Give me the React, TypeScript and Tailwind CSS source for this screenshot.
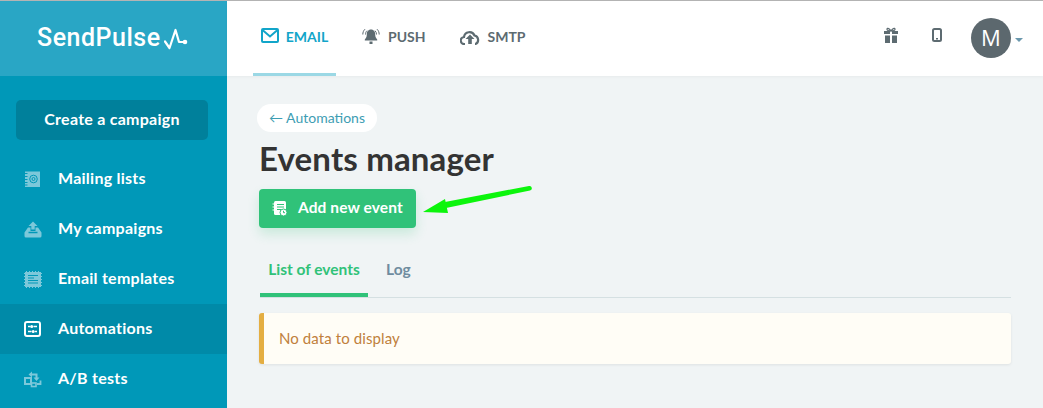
import React from "react";

function IconBook() {
  return (
    <svg width="16" height="16" viewBox="0 0 16 16" fill="none">
      <rect x="1" y="0.500" width="15" height="15.500" fill="#7cc8da" />
      <path d="M1 2.500h2.500M1 5.500h2.500M1 8.500h2.500M1 11.500h2.500M1 14h2.500" stroke="#0098b8" strokeWidth="1" />
      <circle cx="9.500" cy="8" r="3.800" stroke="#0098b8" fill="none" strokeWidth="1" />
      <circle cx="9.500" cy="8" r="1.500" stroke="#0098b8" fill="none" strokeWidth="1" />
    </svg>
  );
}
function IconUpload() {
  return (
    <svg width="18" height="17" viewBox="0 0 18 17" fill="none">
      <path d="M0.500 11.500 4 6.500h2.500v3.500h5V6.500H14l3.500 5V15a1.500 1.500 0 0 1-1.500 1.500H2A1.500 1.500 0 0 1 .5 15z" fill="#7cc8da" />
      <path d="M9 0.500 13.500 5h-2.800v3.500H7.300V5H4.500z" fill="#7cc8da" />
      <path d="M4.500 11.500h9" stroke="#0098b8" strokeWidth="1.500" />
    </svg>
  );
}
function IconTemplate() {
  return (
    <svg width="18" height="17" viewBox="0 0 18 17" fill="none">
      <rect x="1" y="1" width="16" height="15" fill="#7cc8da" />
      <path d="M0 2.500h1M0 5.500h1M0 8.500h1M0 11.500h1M0 14.500h1M17 2.500h1M17 5.500h1M17 8.500h1M17 11.500h1M17 14.500h1M2.500 0v1M5.500 0v1M8.500 0v1M11.500 0v1M14.500 0v1M2.500 16v1M5.500 16v1M8.500 16v1M11.500 16v1M14.500 16v1" stroke="#7cc8da" />
      <path d="M4 4.500h10M4 7h6M4 9.500h10M4 12h10" stroke="#0098b8" />
    </svg>
  );
}
function IconAutomation() {
  return (
    <svg width="17" height="16" viewBox="0 0 17 16" fill="none">
      <rect x="1" y="1" width="15" height="14" rx="2" stroke="#fff" strokeWidth="2" />
      <path d="M4 5.500h2.200M9.500 5.500h3.500M4 10.500h3.500M11 10.500h2" stroke="#fff" strokeWidth="1.400" />
      <circle cx="7.700" cy="5.500" r="1.500" fill="#fff" />
      <circle cx="9.200" cy="10.500" r="1.500" fill="#fff" />
    </svg>
  );
}
function IconAB() {
  return (
    <svg width="18" height="17" viewBox="0 0 18 17" fill="none">
      <rect x="1" y="7" width="6" height="6" stroke="#7cc8da" strokeWidth="2" />
      <rect x="7.500" y="12" width="4.500" height="3.500" stroke="#7cc8da" strokeWidth="1.600" />
      <path d="M6 3.500h6.500V7" stroke="#7cc8da" strokeWidth="2" />
      <path d="M9.500 6.500h6l-3 3.500zM8 0.500v6L4.500 3.500z" fill="#7cc8da" />
      <path d="M13 13h3.500V9.500" stroke="#7cc8da" strokeWidth="1.800" />
    </svg>
  );
}

const items = [
  { label: "Mailing lists", icon: <IconBook /> },
  { label: "My campaigns", icon: <IconUpload /> },
  { label: "Email templates", icon: <IconTemplate /> },
  { label: "Automations", icon: <IconAutomation />, active: true },
  { label: "A/B tests", icon: <IconAB /> },
];

export default function App() {
  return (
    <div className="relative flex flex-col w-[1043px] h-[408px] overflow-hidden bg-[#f0f4f5] font-['Lato','Noto_Sans',sans-serif]">
      <div className="h-px bg-[#b4b4b4] shrink-0" />
      <div className="flex flex-1 min-h-0">
        <aside className="w-[227px] shrink-0 bg-[#0098b8] flex flex-col">
          <div className="h-[75px] bg-[#29a6c5] flex items-center pl-[37px] shrink-0">
            <span className="text-white text-[25px] leading-none font-medium font-['Roboto',sans-serif] tracking-[0.5px] pb-[2px]">SendPulse</span>
            <svg width="24" height="24" viewBox="0 0 24 24" fill="none" className="ml-[3px] mt-[3px]">
              <path d="M1 13.500 5.500 20 11.500 2 15 14h6" stroke="#fff" strokeWidth="2.200" strokeLinejoin="round" strokeLinecap="round" />
              <circle cx="21" cy="14" r="2.300" fill="#fff" />
            </svg>
          </div>
          <div className="pl-4 pt-6">
            <button className="w-[192px] h-10 rounded-[5px] bg-[#00809b] text-white text-[16px] tracking-[0.25px] font-bold flex items-center justify-center pb-[3px]">
              Create a campaign
            </button>
          </div>
          <nav className="mt-[14px] flex flex-col">
            {items.map((it) => (
              <div key={it.label} className={`h-[50px] flex items-center pl-6 ${it.active ? "bg-[#008aa8]" : ""}`}>
                <span className="w-[34px] shrink-0 flex items-center">{it.icon}</span>
                <span className="text-white text-[16px] tracking-[0.25px] font-bold pb-[2px]">{it.label}</span>
              </div>
            ))}
          </nav>
        </aside>

        <div className="flex-1 min-w-0 flex flex-col">
          <header className="h-[75px] shrink-0 bg-white flex items-stretch pl-[26px] shadow-[0_1px_3px_rgba(0,0,0,0.04)]">
            <div className="w-[83px] flex items-center justify-center gap-[7px] border-b-[3px] border-[#9bd8e5] pt-[3px]">
              <svg width="18" height="15" viewBox="0 0 18 15" fill="none" className="mb-[6px]">
                <rect x="1" y="1" width="16" height="13" rx="1" stroke="#12a5c9" strokeWidth="2" />
                <path d="M1.500 2 9 8.500 16.500 2" stroke="#12a5c9" strokeWidth="2" />
              </svg>
              <span className="text-[#12a5c9] text-[14px] font-bold mb-[4px]">EMAIL</span>
            </div>
            <div className="ml-[26px] flex items-center gap-[8px] pb-[4px]">
              <svg width="18" height="17" viewBox="0 0 18 17" fill="#5d6b71">
                <path d="M9 1.500c3 0 4.200 2.400 4.200 5 0 2.600 1 3.800 2 5v1H2.800v-1c1-1.200 2-2.400 2-5 0-2.600 1.200-5 4.200-5z" />
                <rect x="7.500" y="13.500" width="3" height="2.500" />
                <path d="M3.500 6.500C3.500 5 4 3.700 5 2.700M14.500 6.500c0-1.500-.5-2.800-1.500-3.800M.8 6.500C.8 4.500 1.500 2.500 3 1.200M17.200 6.500c0-2-.7-4-2.200-5.300" stroke="#5d6b71" strokeWidth="1" fill="none" />
              </svg>
              <span className="text-[#5d6b71] text-[14px] font-bold">PUSH</span>
            </div>
            <div className="ml-[34px] flex items-center gap-[8px] pb-[4px]">
              <svg width="20" height="16" viewBox="0 0 20 16" fill="none">
                <path d="M5 15H4.500a3.500 3.500 0 0 1-.5-7 5.500 5.500 0 0 1 10.500-1.500A4.500 4.500 0 0 1 15.500 15H15" stroke="#5d6b71" strokeWidth="2.200" />
                <path d="M10 5.500 14.500 10h-2.700v5H8.200v-5H5.500z" fill="#5d6b71" />
              </svg>
              <span className="text-[#5d6b71] text-[14px] font-bold">SMTP</span>
            </div>
            <div className="ml-auto flex items-center pb-[3px]">
              <svg width="16" height="17" viewBox="0 0 16 17" fill="#5d6b71" className="mb-[4px]">
                <path d="M1 4h6v3H1zM9 4h6v3H9zM2 8.500h5V16H2zM9 8.500h5V16H9z" />
                <path d="M8 4C6.500 1.500 4.500 0.800 4 2s1.500 2 4 2c2.500 0 4.500-.8 4-2s-2.500-.5-4 2z" stroke="#5d6b71" strokeWidth="1.200" fill="none" />
              </svg>
              <svg width="10" height="14" viewBox="0 0 10 14" fill="none" className="ml-[33px] mb-[5px]">
                <rect x="1" y="1" width="8" height="12" rx="1.500" stroke="#5d6b71" strokeWidth="2" />
                <path d="M4 10.800h2" stroke="#5d6b71" strokeWidth="1.400" />
              </svg>
              <div className="ml-[29px] w-10 h-10 rounded-full bg-[#5c686e] text-white text-[22px] flex items-center justify-center font-['Open_Sans',sans-serif] mt-px">M</div>
              <span className="ml-[4px] mr-[20px] mt-[6px] w-0 h-0 border-x-[4px] border-x-transparent border-t-[4px] border-t-[#6b98ad]" />
            </div>
          </header>

          <main className="flex-1 min-h-0 pl-[30px] pr-[32px] pt-[28px]">
            <a className="inline-flex items-center h-[28px] pl-3 pr-3 pb-[2px] rounded-full bg-white text-[#3d9db3] text-[14px]">
              ← Automations
            </a>
            <h1 className="ml-[2px] mt-[7px] text-[#333333] text-[33px] leading-[38px] font-bold tracking-[0.15px]">Events manager</h1>
            <div className="ml-[2px] mt-[12px] w-[157px] h-[39px] rounded-[4px] bg-[#30c279] shadow-[0_6px_12px_rgba(48,194,121,0.2)] flex items-center pl-[13px] gap-[10px]">
              <svg width="16" height="17" viewBox="0 0 16 17" fill="none">
                <rect x="2" y="1" width="12" height="14" rx="1.500" fill="#fff" />
                <path d="M5 4.500h7M5 7h7M5 9.500h4" stroke="#30c279" strokeWidth="1" />
                <path d="M0.500 4h3M0.500 7h3M0.500 10h3" stroke="#fff" strokeWidth="1" />
                <circle cx="11.500" cy="12.500" r="3.500" fill="#fff" stroke="#30c279" strokeWidth="1" />
                <path d="M11.500 10.800v1.900h1.500" stroke="#30c279" strokeWidth="1" />
              </svg>
              <span className="text-white text-[15.5px] tracking-[0.1px] font-bold pb-px">Add new event</span>
            </div>
            <div className="ml-[3px] mt-[16px] h-[54px] flex border-b border-[#d5e0e2]">
              <div className="w-[108px] h-[53px] pt-[3px] flex items-center justify-center border-b-4 border-[#30c279] text-[#30c279] text-[15.5px] font-bold">List of events</div>
              <div className="ml-[18px] h-[53px] pt-[3px] pb-[4px] flex items-center text-[#6f8c9f] text-[15.5px] font-bold">Log</div>
            </div>
            <div className="ml-[2px] mt-[15px] h-[51px] bg-[#fffdf6] border-l-[5px] border-[#e4ae42] rounded-[3px] shadow-[0_1px_3px_rgba(0,0,0,0.08)] flex items-center pl-[15px] pb-px text-[#c0803c] text-[15px] tracking-[0.1px]">
              No data to display
            </div>
          </main>
        </div>
      </div>

      <svg width="114" height="32" viewBox="0 0 114 32" className="absolute left-[419px] top-[184px]" fill="none">
        <path d="M110 2 26 18 27 24 111 6.500a2 2 0 0 0-1-4.500z" fill="#0cf50c" />
        <path d="M4 28 26 15 29 29z" fill="#0cf50c" />
      </svg>
    </div>
  );
}
